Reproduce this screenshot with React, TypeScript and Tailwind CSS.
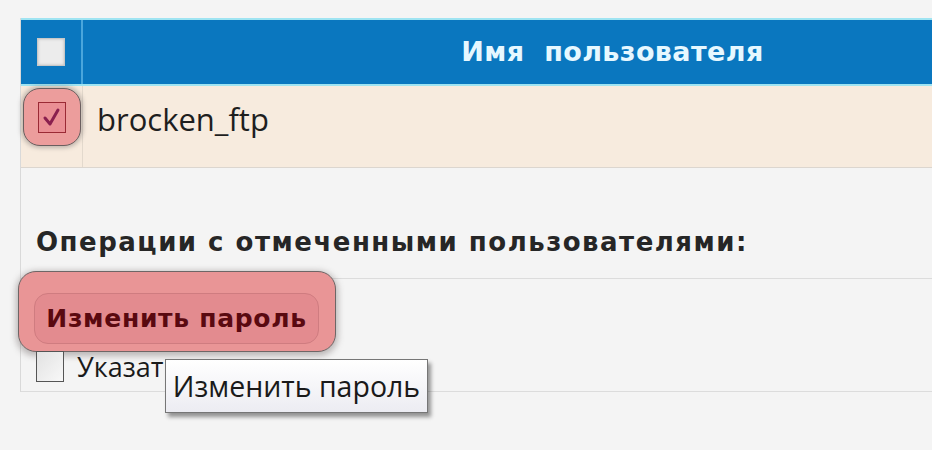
import React from "react";

const font = { fontFamily: '"DejaVu Sans", Verdana, sans-serif' };
const sans = { fontFamily: '"Open Sans", sans-serif' };

function Check() {
  return (
    <svg width="22" height="22" viewBox="0 0 22 22">
      <path d="M4 12 L9 18 L17 4" fill="none" stroke="#8a1f4e" strokeWidth="3" strokeLinecap="round" strokeLinejoin="round" />
    </svg>
  );
}

export default function App() {
  return (
    <div className="w-[932px] h-[450px] overflow-hidden bg-[#f4f4f4] pt-[18px] pl-[20px]" style={font}>
      <div className="relative w-[1122px] border-l border-[#d9d9d9]">
        {/* header */}
        <div className="flex h-[68px] bg-[#0a77bf] border-t-2 border-b-2 border-[#9fe4f2]">
          <div className="w-[62px] flex items-center justify-center border-r-2 border-[#4aa6dc]">
            <div className="w-[28px] h-[28px] bg-[#ececec] border border-[#c8c8c8] shadow-[inset_0_0_3px_#bbb]" />
          </div>
          <div className="flex-1 flex items-center justify-center text-[27px] font-bold tracking-[0.4px] text-[#e6f8ff]">
            Имя&nbsp; пользователя
          </div>
        </div>
        {/* row */}
        <div className="flex h-[82px] bg-[#f7ebde] border-b border-[#dcd6cf]">
          <div className="w-[62px] border-r border-[#e3d9cd] pt-[2px] pl-[2px]">
            <div className="w-[58px] h-[58px] rounded-[17px] border border-[#6b5f5f] bg-[#ec9d9c] shadow-[0_0_4px_2px_rgba(90,80,80,0.35)] flex items-center justify-center">
              <div className="w-[28px] h-[31px] border border-[#9a2a35] bg-[#ea8f94] flex items-center justify-center">
                <Check />
              </div>
            </div>
          </div>
          <div className="pl-[14px] pt-[10px] text-[31px] text-[#1e1e1e]" style={sans}>
            brocken_ftp
          </div>
        </div>
        {/* section title */}
        <div className="h-[111px] border-b border-[#dcdcdc] flex items-end pb-[16px] pl-[15px] text-[26px] font-bold tracking-[1.5px] text-[#262626]">
          Операции с отмеченными пользователями:
        </div>
        {/* actions */}
        <div className="h-[121px] border-b border-[#dcdcdc]">
          <div className="ml-[-3px] mt-[-8px] w-[318px] h-[81px] rounded-[18px] border border-[#6e6666] bg-[#e99596] shadow-[0_2px_6px_2px_rgba(80,70,70,0.35)] pl-[15px] pt-[21px]">
            <div className="w-[285px] h-[51px] rounded-[14px] border border-[#cf7c80] bg-[#e38b8f] flex items-center justify-center text-[25px] font-bold tracking-[0.7px] text-[#5a0910]">
              Изменить пароль
            </div>
          </div>
          <div className="flex items-center pl-[15px] mt-[-1px]">
            <div className="w-[28px] h-[31px] border border-[#555] bg-gradient-to-br from-[#e2e2e2] to-[#f8f8f8]" />
            <span className="ml-[13px] text-[27px] leading-[31px] text-[#1a1a1a]" style={sans}>
              Указать
            </span>
          </div>
        </div>
        {/* tooltip */}
        <div
          className="absolute left-[144px] top-[341px] w-[263px] h-[54px] bg-gradient-to-b from-white to-[#ececf2] border border-[#767676] shadow-[3px_4px_4px_rgba(0,0,0,0.4)] flex items-center justify-center text-[28.5px] text-[#1a1a1a]"
          style={sans}
        >
          Изменить пароль
        </div>
      </div>
    </div>
  );
}
